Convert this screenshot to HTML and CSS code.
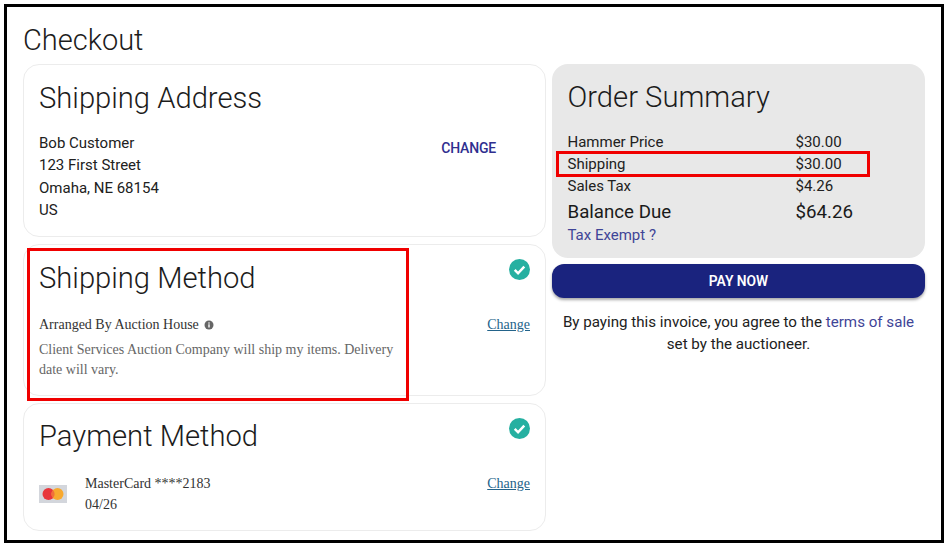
FILE: index.html
```html
<!DOCTYPE html>
<html lang="en">

<head>
    <meta charset="UTF-8" />
    <title>Checkout</title>
    <link rel="stylesheet" href="styles.css">
</head>

<body>
    <div class="frame">
        <h1 class="page-title">Checkout</h1>
        <div class="columns">
            <div class="left-col">
                <section class="card address-card">
                    <h2>Shipping Address</h2>
                    <div class="card-row">
                        <div class="address">
                            <div>Bob Customer</div>
                            <div>123 First Street</div>
                            <div>Omaha, NE 68154</div>
                            <div>US</div>
                        </div>
                        <a class="change-btn" href="#">CHANGE</a>
                    </div>
                </section>

                <section class="card method-card">
                    <svg class="check" viewBox="0 0 22 22" aria-hidden="true">
                        <circle cx="11" cy="11" r="11" fill="#26b0a1" />
                        <path d="M6 11.500l3.500 3.500 6.500-7" fill="none" stroke="#fff" stroke-width="2.600" />
                    </svg>
                    <h2>Shipping Method</h2>
                    <div class="card-row serif-row">
                        <div class="method-text">
                            <div class="method-name">Arranged By Auction House
                                <svg class="info" viewBox="0 0 10 10" aria-hidden="true">
                                    <circle cx="5" cy="5" r="4.500" fill="#666" />
                                    <rect x="4.300" y="4.300" width="1.400" height="3.200" fill="#fff" />
                                    <rect x="4.300" y="2.400" width="1.400" height="1.200" fill="#fff" />
                                </svg>
                            </div>
                            <p>Client Services Auction Company will ship my items. Delivery date will vary.</p>
                        </div>
                        <a class="change-link" href="#">Change</a>
                    </div>
                </section>

                <section class="card payment-card">
                    <svg class="check" viewBox="0 0 22 22" aria-hidden="true">
                        <circle cx="11" cy="11" r="11" fill="#26b0a1" />
                        <path d="M6 11.500l3.500 3.500 6.500-7" fill="none" stroke="#fff" stroke-width="2.600" />
                    </svg>
                    <h2>Payment Method</h2>
                    <div class="card-row serif-row">
                        <svg class="card-logo" viewBox="0 0 28 18" aria-hidden="true">
                            <rect width="28" height="18" fill="#d3d6dc" />
                            <circle cx="9.500" cy="9" r="6" fill="#e8363c" />
                            <circle cx="18.500" cy="9" r="6" fill="#f8a92e" />
                            <path d="M14 4.900a6 6 0 0 1 0 8.200a6 6 0 0 1 0-8.200z" fill="#f0703a" />
                        </svg>
                        <div class="payment-text">
                            <div>MasterCard ****2183</div>
                            <div>04/26</div>
                        </div>
                        <a class="change-link" href="#">Change</a>
                    </div>
                </section>
            </div>

            <div class="right-col">
                <section class="summary">
                    <h2>Order Summary</h2>
                    <div class="line"><span>Hammer Price</span><span>$30.00</span></div>
                    <div class="line"><span>Shipping</span><span>$30.00</span></div>
                    <div class="line"><span>Sales Tax</span><span>$4.26</span></div>
                    <div class="line total"><span>Balance Due</span><span>$64.26</span></div>
                    <a class="tax-link" href="#">Tax Exempt ?</a>
                </section>
                <button class="pay-btn" type="button">PAY NOW</button>
                <p class="terms">By paying this invoice, you agree to the <a href="#">terms of sale</a> set by the auctioneer.</p>
            </div>
        </div>

        <div class="mark mark-method"></div>
        <div class="mark mark-shipping"></div>
    </div>
</body>

</html>
```

FILE: styles.css
```css
:root {
    --navy: #1a237e;
    --link: #3f4597;
    --line: #ececec;
    --red: #f00000;
}

* {
    margin: 0;
    padding: 0;
    box-sizing: border-box;
}

body {
    width: 947px;
    height: 545px;
    padding: 4px 3px 2px 4px;
    background: #fff;
    color: #212121;
    font-family: Roboto, sans-serif;
    overflow: hidden;
}

a {
    color: var(--link);
    text-decoration: none;
}

.frame {
    position: relative;
    height: 539px;
    padding: 12px 16px 0 16px;
    border: 3px solid #000;
    background: #fff;
}

.page-title {
    height: 45px;
    font-size: 29px;
    font-weight: 300;
    line-height: 42px;
    color: #1c1c1c;
}

.columns {
    display: flex;
    gap: 6px;
}

.left-col {
    width: 523px;
    display: flex;
    flex-direction: column;
    gap: 7px;
}

.right-col {
    width: 373px;
}

h2 {
    font-size: 29.200px;
    font-weight: 300;
    line-height: 40px;
    color: #1c1c1c;
}

.card {
    position: relative;
    padding: 13px 15px 0 15px;
    border: 1px solid var(--line);
    border-radius: 16px;
    background: #fff;
}

.address-card {
    height: 173px;
}

.method-card {
    height: 152px;
}

.payment-card {
    height: 128px;
    padding-top: 12px;
}

.check {
    position: absolute;
    top: 14px;
    right: 15px;
    width: 21px;
    height: 21px;
}

.card-row {
    display: flex;
    justify-content: space-between;
}

.address {
    margin-top: 14px;
    font-size: 15px;
    line-height: 22.300px;
}

.change-btn {
    margin: 19px 34px 0 0;
    font-size: 14px;
    font-weight: 500;
    line-height: 22px;
    letter-spacing: -0.200px;
    color: #2f2f8f;
}

.serif-row {
    font-family: "Liberation Serif", serif;
    font-size: 14px;
    color: #333;
}

.method-text {
    width: 372px;
    margin-top: 16px;
}

.method-name {
    line-height: 22px;
}

.info {
    width: 10px;
    height: 10px;
    margin-left: 2px;
    vertical-align: -1px;
}

.method-text p {
    margin-top: 4px;
    line-height: 20px;
    color: #666;
}

.change-link {
    margin-top: 16px;
    line-height: 22px;
    color: #23638a;
    text-decoration: underline;
}

.payment-card .serif-row {
    margin-top: 17px;
}

.payment-card .change-link {
    margin-top: 0;
}

.card-logo {
    width: 28px;
    height: 18px;
    margin-top: 12px;
}

.payment-text {
    flex: 1;
    margin-left: 18px;
    line-height: 21px;
}

.summary {
    height: 194px;
    padding: 13px 15px 0 15.500px;
    border-radius: 16px;
    background: #e8e8e8;
}

.summary h2 {
    margin-bottom: 14px;
}

.line {
    display: flex;
    font-size: 15px;
    line-height: 22px;
}

.line span:first-child {
    width: 228px;
}

.total {
    margin-top: 1px;
    font-size: 18.700px;
    line-height: 28px;
    color: #1a1a1a;
}

.tax-link {
    display: block;
    margin-top: -1px;
    font-size: 15px;
    line-height: 20px;
}

.pay-btn {
    display: block;
    width: 100%;
    height: 34px;
    margin-top: 6px;
    border: none;
    border-radius: 12px;
    background: var(--navy);
    color: #fff;
    font-family: Roboto, sans-serif;
    font-size: 13.800px;
    font-weight: 600;
    box-shadow: 0 2px 3px rgba(0, 0, 0, 0.35);
}

.terms {
    margin-top: 13px;
    padding: 0 8px;
    font-size: 15.150px;
    line-height: 22px;
    text-align: center;
}

.mark {
    position: absolute;
    border: 3px solid var(--red);
}

.mark-method {
    left: 20px;
    top: 241px;
    width: 382px;
    height: 153px;
}

.mark-shipping {
    left: 549px;
    top: 144px;
    width: 314px;
    height: 26px;
}
```
